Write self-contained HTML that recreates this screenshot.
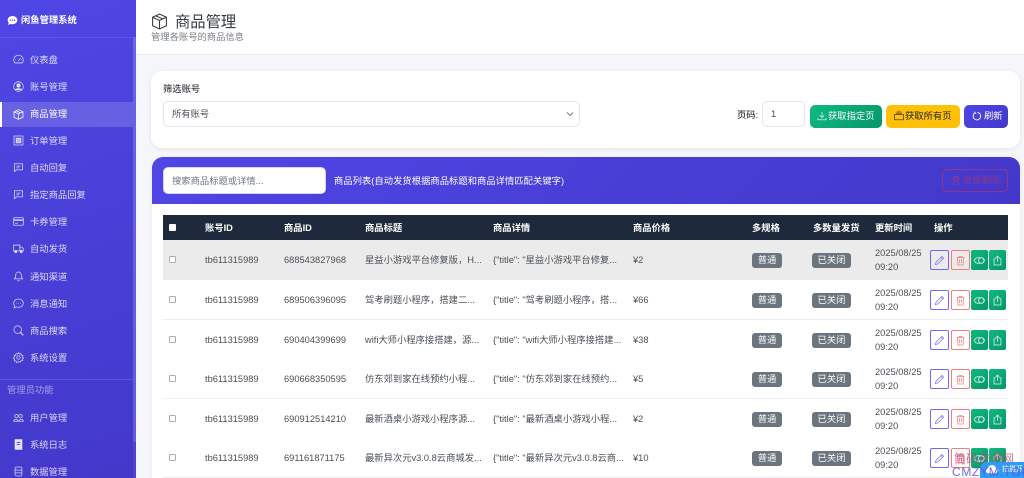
<!DOCTYPE html>
<html lang="zh"><head><meta charset="utf-8"><title>商品管理</title>
<style>
*{box-sizing:border-box}
html,body{margin:0;padding:0;width:1024px;height:478px;overflow:hidden;background:#f5f6fa;font-family:"Liberation Sans","Noto Sans CJK SC",sans-serif;font-size:9.3px;color:#212529}
#wrap{position:relative;width:1024px;height:478px;overflow:hidden;background:#f5f6fa}
.a{position:absolute;white-space:nowrap}
#side{position:absolute;left:0;top:0;width:136px;height:478px;background:linear-gradient(160deg,#4f46e5,#4338ca);overflow:hidden}
.nav{position:absolute;left:0;width:133px;height:25px;line-height:25px;color:rgba(255,255,255,.8)}
.nav span{position:absolute;left:30px;top:1px}
.nav svg{position:absolute;left:13px;top:7px;width:11px;height:11px;fill:none;stroke:rgba(255,255,255,.8);stroke-width:1.1}
.cell{position:absolute;white-space:nowrap;color:#495057;line-height:13px}
.row{position:absolute;left:163px;width:845px;height:40px;background:#fff;border-bottom:1px solid #ebedf0}
.row .cell{top:14px}
.row .cell.t{top:7px;line-height:13.5px}
.cb{position:absolute;left:6px;top:16px;width:7px;height:7px;border:1px solid #a9adb2;border-radius:1.5px;background:#fff}
.badge{position:absolute;top:13px;height:15px;line-height:15px;text-align:center;background:#6c757d;color:#fff;border-radius:3px;font-size:9.3px}
.btn{position:absolute;top:10px;height:20px;border-radius:2px}
.btn svg{position:absolute;left:50%;top:50%;width:11px;height:11px;margin:-5.5px 0 0 -5.5px;fill:none;stroke-width:1.1}
.e{left:767px;width:19px;border:1px solid #6f68f0;background:#fff0}
.e svg{stroke:#7d76ef}
.d{left:788px;width:18.5px;border:1px solid #f47c7c}
.d svg{stroke:#f47c7c}
.g1{left:808px;width:17px;background:linear-gradient(135deg,#10b981,#059669)}
.g2{left:826px;width:17px;background:linear-gradient(135deg,#10b981,#059669)}
.g1 svg,.g2 svg{stroke:#e3f7ef}
.th{position:absolute;top:1px;line-height:25px;color:#fff;font-weight:700;white-space:nowrap}
.pb{position:absolute;top:105px;height:23px;line-height:23px;border-radius:5px;white-space:nowrap}
.pb svg{position:absolute;top:6px;width:10px;height:10px;fill:none;stroke-width:1}
.pb span{position:absolute;top:0}
</style></head><body>
<div id="wrap">
<svg width="0" height="0" style="position:absolute"><defs>
<symbol id="i-box" viewBox="0 0 16 16"><path d="M8 1l6.500 3v8L8 15l-6.500-3V4zM1.500 4L8 7l6.500-3M8 7v8M4.500 2.600l6.500 3"/></symbol>
<symbol id="i-edit" viewBox="0 0 16 16"><path d="M11.500 2l2.500 2.500-8.500 8.500-3.500 1 1-3.500zM10 3.500L12.500 6"/></symbol>
<symbol id="i-trash" viewBox="0 0 16 16"><path d="M2.500 3.500h11M6 3.500V2h4v1.500M3.500 3.500l.7 11h7.600l.7-11M6.500 6v6M9.500 6v6"/></symbol>
<symbol id="i-toggle" viewBox="0 0 16 16"><rect x="1" y="4" width="14" height="8" rx="4"/><circle cx="10.500" cy="8" r="4"/></symbol>
<symbol id="i-up" viewBox="0 0 16 16"><path d="M5.500 5.500H3v9h10v-9h-2.500M8 10V1.500M5.500 4L8 1.500 10.500 4"/></symbol>
<symbol id="i-chat" viewBox="0 0 16 16"><path d="M2 2.500h12v9H5l-3 2.500z M5 6h6M5 8.500h4"/></symbol>
</defs></svg>

<div id="side">
 <div class="a" style="left:7px;top:13px;color:#fff;font-weight:700;line-height:14px">
  <svg width="11" height="11" viewBox="0 0 16 16" style="position:absolute;left:0;top:2px"><path d="M8 1.500c4 0 7 2.600 7 6s-3 6-7 6c-1 0-2-.2-3-.5L1.500 14.500l1-3C1.500 10.400 1 9 1 7.500c0-3.400 3-6 7-6z" fill="#fff"/><circle cx="5" cy="7.500" r="1" fill="#4f46e5"/><circle cx="8" cy="7.500" r="1" fill="#4f46e5"/><circle cx="11" cy="7.500" r="1" fill="#4f46e5"/></svg>
  <span style="margin-left:14px">闲鱼管理系统</span></div>
 <div class="a" style="left:0;top:37px;width:133px;height:1px;background:rgba(255,255,255,.1)"></div>
 <div class="nav" style="top:47px"><svg viewBox="0 0 16 16"><path d="M2.500 13A7 7 0 1 1 13.500 13zM8 10l3-4M3.500 8.500h1M11.500 8.500h1"/></svg><span>仪表盘</span></div>
 <div class="nav" style="top:74px"><svg viewBox="0 0 16 16"><circle cx="8" cy="8" r="7"/><circle cx="8" cy="6.500" r="2.500" fill="rgba(255,255,255,.8)"/><path d="M3.500 13c1-2.500 8-2.500 9 0" fill="rgba(255,255,255,.8)"/></svg><span>账号管理</span></div>
 <div class="nav" style="top:102px;background:rgba(255,255,255,.16);color:#fff;border-left:2px solid #fff"><svg viewBox="0 0 16 16" style="left:11px;stroke:#fff"><use href="#i-box"/></svg><span style="left:28px;top:0">商品管理</span></div>
 <div class="nav" style="top:128px"><svg viewBox="0 0 16 16"><path d="M1.500 1.500h13v13h-13z"/><path d="M4.500 4.500h7v7h-7z" fill="rgba(255,255,255,.6)"/></svg><span>订单管理</span></div>
 <div class="nav" style="top:155px"><svg viewBox="0 0 16 16"><use href="#i-chat"/></svg><span>自动回复</span></div>
 <div class="nav" style="top:182px"><svg viewBox="0 0 16 16"><use href="#i-chat"/></svg><span>指定商品回复</span></div>
 <div class="nav" style="top:209px"><svg viewBox="0 0 16 16"><rect x="1" y="2.500" width="14" height="11" rx="1"/><path d="M1 6h14" stroke-width="2"/><path d="M3 10.500h4"/></svg><span>卡券管理</span></div>
 <div class="nav" style="top:236px"><svg viewBox="0 0 16 16"><path d="M1 3h9v8.500H1zM10 6h3l2 2.500v3h-5z"/><circle cx="4" cy="12.500" r="1.500" fill="rgba(255,255,255,.8)"/><circle cx="12" cy="12.500" r="1.500" fill="rgba(255,255,255,.8)"/></svg><span>自动发货</span></div>
 <div class="nav" style="top:264px"><svg viewBox="0 0 16 16"><path d="M8 1.500c-2.500 0-4 2-4 4.500 0 3-1.500 5-2 5.500h12c-.5-.5-2-2.500-2-5.500 0-2.500-1.500-4.500-4-4.500zM6.500 13.500c.5 1.300 2.500 1.300 3 0"/></svg><span>通知渠道</span></div>
 <div class="nav" style="top:291px"><svg viewBox="0 0 16 16"><path d="M8 1.500c4 0 7 2.600 7 6s-3 6-7 6c-1 0-2-.2-3-.5L1.500 14.500l1-3C1.500 10.400 1 9 1 7.500c0-3.400 3-6 7-6z"/><path d="M4.500 7.500h1M7.500 7.500h1M10.500 7.500h1"/></svg><span>消息通知</span></div>
 <div class="nav" style="top:318px"><svg viewBox="0 0 16 16"><circle cx="6.800" cy="6.800" r="5.500"/><path d="M10.800 10.800L15 15" stroke-width="1.600"/></svg><span>商品搜索</span></div>
 <div class="nav" style="top:345px"><svg viewBox="0 0 16 16"><circle cx="8" cy="8" r="2.500"/><path d="M8 1l1.300 2 2.300-.7.500 2.300 2.400.6-.7 2.300L15.500 9l-1.900 1.100.5 2.300-2.400.2-.9 2.200L8 14l-2.800 1.300-.9-2.200-2.400-.2.500-2.300L.5 9l1.700-1.500-.7-2.300 2.400-.6.500-2.300 2.300.7z"/></svg><span>系统设置</span></div>
 <div class="a" style="left:0;top:379px;width:133px;height:1px;background:rgba(255,255,255,.12)"></div>
 <div class="a" style="left:7px;top:383px;line-height:14px;color:rgba(255,255,255,.5)">管理员功能</div>
 <div class="nav" style="top:405px"><svg viewBox="0 0 16 16"><circle cx="5" cy="6" r="2.500"/><circle cx="11" cy="6" r="2.500"/><path d="M1 13.500c0-3.500 6-3.500 6.500 0zM8.500 13.500c.5-3.500 6.500-3.500 6.500 0z"/></svg><span>用户管理</span></div>
 <div class="nav" style="top:432px"><svg viewBox="0 0 16 16"><path d="M3 1h10v14H3z" fill="rgba(255,255,255,.85)"/><path d="M5.500 5h5M5.500 8h5" stroke="#4338ca"/></svg><span>系统日志</span></div>
 <div class="nav" style="top:459px"><svg viewBox="0 0 16 16"><rect x="3" y="1.500" width="10" height="13" rx="2.500"/><path d="M3 6h10M3 10h10"/></svg><span>数据管理</span></div>
 <div class="a" style="left:133px;top:37px;width:3px;height:441px;background:rgba(255,255,255,.05)"></div>
 <div class="a" style="left:133px;top:37px;width:3px;height:405px;background:rgba(255,255,255,.13)"></div>
</div>

<div class="a" style="left:136px;top:0;width:888px;height:55px;background:#fff;border-bottom:1px solid #e7e9ee"></div>
<svg class="a" style="left:151px;top:13px;fill:none;stroke:#343a40;stroke-width:1" width="17" height="17" viewBox="0 0 16 16"><use href="#i-box"/></svg>
<div class="a" style="left:175px;top:12px;font-size:15.3px;line-height:21px;color:#343a40">商品管理</div>
<div class="a" style="left:151px;top:30px;line-height:14px;color:#7a8087">管理各账号的商品信息</div>

<div class="a" style="left:151px;top:71px;width:869px;height:77px;background:#fff;border-radius:11px;box-shadow:0 1px 5px rgba(0,0,0,.08)"></div>
<div class="a" style="left:163px;top:82px;line-height:14px;color:#343a40;font-weight:500">筛选账号</div>
<div class="a" style="left:163px;top:101px;width:417px;height:26px;border:1px solid #e3e6ea;border-radius:5px;background:#fff;line-height:25px;padding-left:8px;color:#495057">所有账号
 <svg style="position:absolute;right:5px;top:8px;fill:none;stroke:#343a40;stroke-width:1.400" width="8" height="8" viewBox="0 0 16 16"><path d="M2 5l6 6 6-6"/></svg></div>
<div class="a" style="left:737px;top:108px;line-height:14px;color:#343a40;font-weight:500">页码:</div>
<div class="a" style="left:762px;top:101px;width:43px;height:26px;border:1px solid #e3e6ea;border-radius:5px;background:#fff;line-height:25px;padding-left:8px;color:#495057">1</div>
<div class="pb" style="left:810px;width:72px;background:linear-gradient(135deg,#10b981,#059669);color:#fff"><svg style="left:7px;stroke:#fff" viewBox="0 0 16 16"><path d="M8 1.500v9M4.500 7L8 10.500 11.500 7M1.500 11v3h13v-3"/></svg><span style="left:18px">获取指定页</span></div>
<div class="pb" style="left:886px;width:74px;background:#ffc107;color:#212529"><svg style="left:8px;stroke:#212529" viewBox="0 0 16 16"><path d="M1 5.500h14v8.500H1zM3 3.500h10M4.500 1.500h7"/></svg><span style="left:19px">获取所有页</span></div>
<div class="pb" style="left:964px;width:44px;background:linear-gradient(135deg,#4f46e5,#4338ca);color:#fff"><svg style="left:8px;stroke:#fff;stroke-width:1.400" viewBox="0 0 16 16"><path d="M9 2.300A6 6 0 1 1 4.500 3.200M4.500 1v2.500h2.500"/></svg><span style="left:20px">刷新</span></div>

<div class="a" style="left:152px;top:157px;width:868px;height:340px;background:#fff;border-radius:11px 11px 0 0;box-shadow:0 1px 5px rgba(0,0,0,.06)"></div>
<div class="a" style="left:152px;top:157px;width:868px;height:47px;background:linear-gradient(135deg,#4f46e5,#4338ca);border-radius:11px 11px 0 0"></div>
<div class="a" style="left:163px;top:167px;width:163px;height:27px;background:#fff;border-radius:5px;border:1px solid #d6d4f7;line-height:26px;padding-left:8px;color:#6c757d">搜索商品标题或详情...</div>
<div class="a" style="left:334px;top:174px;line-height:14px;color:#fff;letter-spacing:.03px">商品列表(自动发货根据商品标题和商品详情匹配关键字)</div>
<div class="a" style="left:942px;top:169px;width:66px;height:23px;border:1px solid rgba(220,53,69,.5);border-radius:5px;line-height:21px;color:rgba(220,53,69,.5)">
 <svg style="position:absolute;left:8px;top:5px;fill:none;stroke:rgba(220,53,69,.55);stroke-width:1.200" width="10" height="10" viewBox="0 0 16 16"><use href="#i-trash"/></svg><span style="position:absolute;left:20px">批量删除</span></div>

<div class="a" style="left:163px;top:215px;width:845px;height:25px;background:#1e293b">
 <div class="a" style="left:6px;top:9px;width:7px;height:7px;background:#fff;border-radius:1px"></div>
 <div class="th" style="left:42px">账号ID</div><div class="th" style="left:121px">商品ID</div><div class="th" style="left:202px">商品标题</div><div class="th" style="left:330px">商品详情</div><div class="th" style="left:470px">商品价格</div><div class="th" style="left:589px">多规格</div><div class="th" style="left:650px">多数量发货</div><div class="th" style="left:712px">更新时间</div><div class="th" style="left:771px">操作</div>
</div>

<div class="row" style="top:240px;background:#ebebeb">
 <div class="cb"></div><div class="cell" style="left:42px">tb611315989</div><div class="cell" style="left:121px">688543827968</div><div class="cell" style="left:202px">星益小游戏平台修复版，H...</div><div class="cell" style="left:330px">{"title": "星益小游戏平台修复...</div><div class="cell" style="left:470px">¥2</div>
 <div class="badge" style="left:589px;width:30px">普通</div><div class="badge" style="left:649px;width:39px">已关闭</div><div class="cell t" style="left:712px">2025/08/25<br>09:20</div>
 <div class="btn e"><svg><use href="#i-edit"/></svg></div><div class="btn d"><svg><use href="#i-trash"/></svg></div><div class="btn g1"><svg><use href="#i-toggle"/></svg></div><div class="btn g2"><svg><use href="#i-up"/></svg></div>
</div>
<div class="row" style="top:280px">
 <div class="cb"></div><div class="cell" style="left:42px">tb611315989</div><div class="cell" style="left:121px">689506396095</div><div class="cell" style="left:202px">驾考刷题小程序，搭建二...</div><div class="cell" style="left:330px">{"title": "驾考刷题小程序，搭...</div><div class="cell" style="left:470px">¥66</div>
 <div class="badge" style="left:589px;width:30px">普通</div><div class="badge" style="left:649px;width:39px">已关闭</div><div class="cell t" style="left:712px">2025/08/25<br>09:20</div>
 <div class="btn e"><svg><use href="#i-edit"/></svg></div><div class="btn d"><svg><use href="#i-trash"/></svg></div><div class="btn g1"><svg><use href="#i-toggle"/></svg></div><div class="btn g2"><svg><use href="#i-up"/></svg></div>
</div>
<div class="row" style="top:320px">
 <div class="cb"></div><div class="cell" style="left:42px">tb611315989</div><div class="cell" style="left:121px">690404399699</div><div class="cell" style="left:202px">wifi大师小程序接搭建，源...</div><div class="cell" style="left:330px">{"title": "wifi大师小程序接搭建...</div><div class="cell" style="left:470px">¥38</div>
 <div class="badge" style="left:589px;width:30px">普通</div><div class="badge" style="left:649px;width:39px">已关闭</div><div class="cell t" style="left:712px">2025/08/25<br>09:20</div>
 <div class="btn e"><svg><use href="#i-edit"/></svg></div><div class="btn d"><svg><use href="#i-trash"/></svg></div><div class="btn g1"><svg><use href="#i-toggle"/></svg></div><div class="btn g2"><svg><use href="#i-up"/></svg></div>
</div>
<div class="row" style="top:359px">
 <div class="cb"></div><div class="cell" style="left:42px">tb611315989</div><div class="cell" style="left:121px">690668350595</div><div class="cell" style="left:202px">仿东郊到家在线预约小程...</div><div class="cell" style="left:330px">{"title": "仿东郊到家在线预约...</div><div class="cell" style="left:470px">¥5</div>
 <div class="badge" style="left:589px;width:30px">普通</div><div class="badge" style="left:649px;width:39px">已关闭</div><div class="cell t" style="left:712px">2025/08/25<br>09:20</div>
 <div class="btn e"><svg><use href="#i-edit"/></svg></div><div class="btn d"><svg><use href="#i-trash"/></svg></div><div class="btn g1"><svg><use href="#i-toggle"/></svg></div><div class="btn g2"><svg><use href="#i-up"/></svg></div>
</div>
<div class="row" style="top:399px">
 <div class="cb"></div><div class="cell" style="left:42px">tb611315989</div><div class="cell" style="left:121px">690912514210</div><div class="cell" style="left:202px">最新酒桌小游戏小程序源...</div><div class="cell" style="left:330px">{"title": "最新酒桌小游戏小程...</div><div class="cell" style="left:470px">¥2</div>
 <div class="badge" style="left:589px;width:30px">普通</div><div class="badge" style="left:649px;width:39px">已关闭</div><div class="cell t" style="left:712px">2025/08/25<br>09:20</div>
 <div class="btn e"><svg><use href="#i-edit"/></svg></div><div class="btn d"><svg><use href="#i-trash"/></svg></div><div class="btn g1"><svg><use href="#i-toggle"/></svg></div><div class="btn g2"><svg><use href="#i-up"/></svg></div>
</div>
<div class="row" style="top:438px">
 <div class="cb"></div><div class="cell" style="left:42px">tb611315989</div><div class="cell" style="left:121px">691161871175</div><div class="cell" style="left:202px">最新异次元v3.0.8云商城发...</div><div class="cell" style="left:330px">{"title": "最新异次元v3.0.8云商...</div><div class="cell" style="left:470px">¥10</div>
 <div class="badge" style="left:589px;width:30px">普通</div><div class="badge" style="left:649px;width:39px">已关闭</div><div class="cell t" style="left:712px">2025/08/25<br>09:20</div>
 <div class="btn e"><svg><use href="#i-edit"/></svg></div><div class="btn d"><svg><use href="#i-trash"/></svg></div><div class="btn g1"><svg><use href="#i-toggle"/></svg></div><div class="btn g2"><svg><use href="#i-up"/></svg></div>
</div>

<div class="a" style="left:954px;top:452px;font-size:12px;line-height:14px;color:rgba(190,70,120,.75)">筒码资源网</div>
<div class="a" style="left:980px;top:462px;width:50px;height:20px;background:#2f9bf5;border-radius:7px 0 0 0"></div>
<svg class="a" style="left:985px;top:463px" width="14" height="12" viewBox="0 0 16 14"><path d="M4 12a3 3 0 0 1-.5-6A4.500 4.500 0 0 1 12 5a3.500 3.500 0 0 1 0 7z" fill="#fff"/></svg>
<div class="a" style="left:1002px;top:465px;font-size:7px;line-height:9px;color:#fff">拍摄开</div>
<div class="a" style="left:952px;top:465px;font-size:12px;line-height:14px;letter-spacing:.7px;color:rgba(90,80,220,.85)">CMZYM.TOP</div>
</div>
</body></html>
